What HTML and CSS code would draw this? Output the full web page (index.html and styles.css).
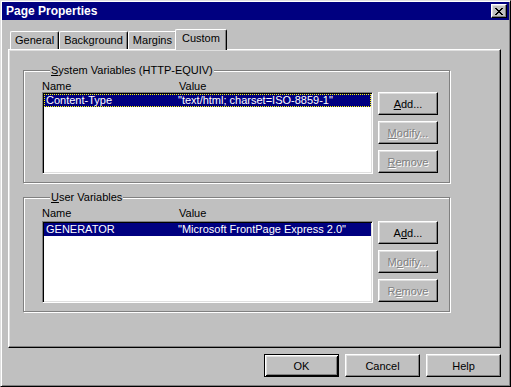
FILE: index.html
```html
<!DOCTYPE html>
<html lang="en">
<head>
    <meta charset="UTF-8">
    <title>Page Properties</title>
    <link rel="stylesheet" href="styles.css">
</head>
<body>
    <div class="window">
        <div class="titlebar">
            <span class="title">Page Properties</span>
            <button class="close-btn" title="Close">
                <svg width="8" height="7" viewBox="0 0 8 7" shape-rendering="crispEdges">
                    <path fill="#000" d="M0 0h2v1H0zM6 0h2v1H6zM1 1h2v1H1zM5 1h2v1H5zM2 2h4v1H2zM3 3h2v1H3zM2 4h4v1H2zM1 5h2v1H1zM5 5h2v1H5zM0 6h2v1H0zM6 6h2v1H6z"/>
                </svg>
            </button>
        </div>

        <div class="dialog">
            <div class="tabs">
                <div class="tab">General</div>
                <div class="tab">Background</div>
                <div class="tab">Margins</div>
                <div class="tab active">Custom</div>
            </div>

            <div class="panel">
                <!-- HTTP-EQUIV meta tags -->
                <div class="group">
                    <div class="group-label"><u>S</u>ystem Variables (HTTP-EQUIV)</div>
                    <div class="group-body">
                        <div class="list-head"><span class="col-name">Name</span><span>Value</span></div>
                        <div class="listbox">
                            <div class="row selected focused"><span class="col-name">Content-Type</span><span>"text/html; charset=ISO-8859-1"</span></div>
                        </div>
                        <div class="btn-col">
                            <button class="btn"><u>A</u>dd...</button>
                            <button class="btn" disabled><u>M</u>odify...</button>
                            <button class="btn" disabled><u>R</u>emove</button>
                        </div>
                    </div>
                </div>

                <!-- NAME meta tags -->
                <div class="group group-user">
                    <div class="group-label"><u>U</u>ser Variables</div>
                    <div class="group-body">
                        <div class="list-head"><span class="col-name">Name</span><span>Value</span></div>
                        <div class="listbox">
                            <div class="row selected"><span class="col-name">GENERATOR</span><span>"Microsoft FrontPage Express 2.0"</span></div>
                        </div>
                        <div class="btn-col">
                            <button class="btn">A<u>d</u>d...</button>
                            <button class="btn" disabled>M<u>o</u>dify...</button>
                            <button class="btn" disabled>R<u>e</u>move</button>
                        </div>
                    </div>
                </div>
            </div>

            <div class="actions">
                <button class="btn wide default">OK</button>
                <button class="btn wide">Cancel</button>
                <button class="btn wide">Help</button>
            </div>
        </div>
    </div>
</body>
</html>
```

FILE: styles.css
```css
body {
    margin: 0;
    background-color: #c0c0c0;
    font-family: "Liberation Sans", Arial, sans-serif;
    font-size: 11px;
    color: #000;
}
.window {
    width: 511px;
    height: 387px;
    box-sizing: border-box;
    background-color: #c0c0c0;
    border: 1px solid;
    border-color: #dfdfdf #000 #000 #dfdfdf;
    box-shadow: inset 1px 1px #fff, inset -1px -1px #808080;
    padding: 1px;
}
.titlebar {
    display: flex;
    align-items: center;
    justify-content: space-between;
    height: 18px;
    padding: 0 2px 0 4px;
    background-color: #000080;
    color: #fff;
}
.title {
    font-weight: bold;
    font-size: 12px;
}
.close-btn {
    display: flex;
    align-items: center;
    justify-content: center;
    width: 16px;
    height: 14px;
    padding: 0;
    box-sizing: border-box;
    background-color: #c0c0c0;
    border: 1px solid;
    border-color: #fff #000 #000 #fff;
    box-shadow: inset -1px -1px #808080, inset 1px 1px #dfdfdf;
}
.close-btn svg { display: block; margin-left: -1px; }

.dialog {
    padding: 9px 8px 0 6px;
}
.tabs {
    display: flex;
    align-items: flex-end;
    height: 20px;
    padding-left: 2px;
    position: relative;
    z-index: 1;
}
.tab {
    height: 18px;
    box-sizing: border-box;
    padding: 0 4px;
    line-height: 16px;
    border-top: 1px solid #fff;
    border-left: 1px solid #fff;
    border-right: 1px solid #000;
    border-radius: 2px 2px 0 0;
    box-shadow: inset -1px 0 #808080;
    background-color: #c0c0c0;
}
.tab.active {
    height: 21px;
    margin: 0 -2px -1px;
    padding: 0 6px;
    line-height: 17px;
    position: relative;
    z-index: 2;
}

.panel {
    height: 299px;
    box-sizing: border-box;
    border: 1px solid;
    border-color: #fff #000 #000 #fff;
    box-shadow: inset -1px -1px #808080, inset 1px 1px #dfdfdf;
    padding: 20px 0 0 14px;
}
.group {
    width: 427px;
    box-sizing: border-box;
    border: 1px solid #808080;
    box-shadow: 1px 1px 0 #fff, inset 1px 1px 0 #fff;
    padding: 0 11px 8px 18px;
}
.group-user { margin-top: 14px; }
.group-label {
    width: fit-content;
    margin: -7px 0 0 8px;
    padding: 0 1px;
    line-height: 13px;
    background-color: #c0c0c0;
}
.group-body {
    display: grid;
    grid-template-columns: 331px 60px;
    column-gap: 5px;
    margin-top: 3px;
}
.list-head {
    grid-column: 1 / 3;
    height: 12px;
    line-height: 12px;
    display: flex;
}
.group-user .list-head { height: 14px; }
.list-head .col-name { width: 137px; }

.listbox {
    height: 82px;
    box-sizing: border-box;
    background-color: #fff;
    border: 1px solid;
    border-color: #808080 #fff #fff #808080;
    box-shadow: inset 1px 1px #000, inset -1px -1px #dfdfdf;
    padding: 1px;
}
.row {
    display: flex;
    height: 13px;
    line-height: 13px;
    padding-left: 2px;
}
.row .col-name { width: 132px; }
.row.selected { background-color: #000080; color: #fff; }
.row.focused { outline: 1px dotted #ffff00; outline-offset: -1px; }

.btn-col {
    display: flex;
    flex-direction: column;
    gap: 6px;
}
.btn {
    width: 60px;
    height: 23px;
    box-sizing: border-box;
    padding: 0;
    font: inherit;
    color: #000;
    background-color: #c0c0c0;
    border: 1px solid;
    border-color: #fff #000 #000 #fff;
    box-shadow: inset -1px -1px #808080, inset 1px 1px #dfdfdf;
}
.btn:disabled { color: #808080; text-shadow: 1px 1px #fff; }
.btn.wide { width: 75px; }
.btn.default {
    border-color: #000;
    box-shadow: inset 1px 1px #fff, inset -1px -1px #000, inset 2px 2px #dfdfdf, inset -2px -2px #808080;
}
.actions {
    display: flex;
    justify-content: flex-end;
    gap: 6px;
    margin-top: 6px;
}
```
